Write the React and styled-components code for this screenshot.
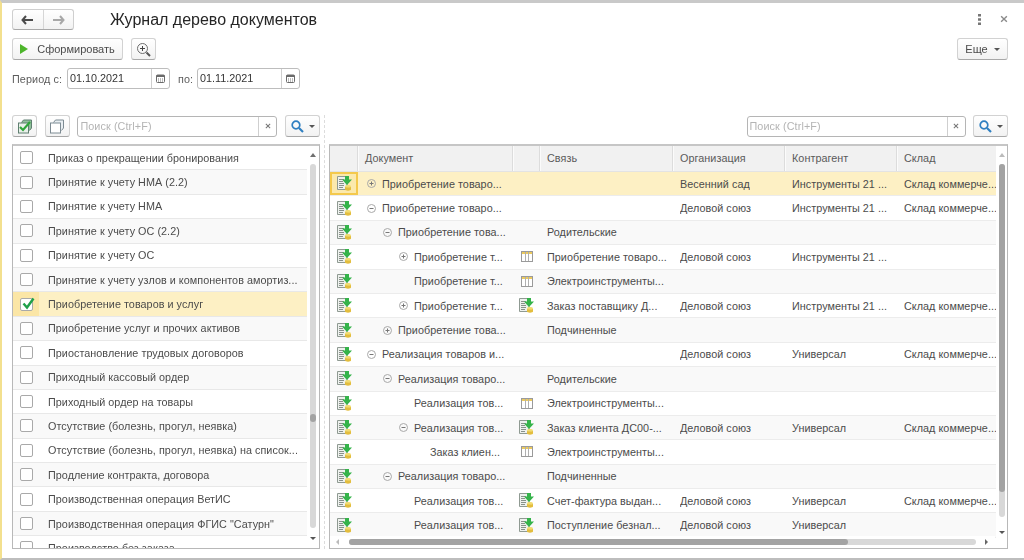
import React from "react";
import styled, { createGlobalStyle } from "styled-components";

const GlobalStyle = createGlobalStyle`
  html, body {
    margin: 0;
    height: 100%;
    background: #fff;
    overflow: hidden;
  }
  body {
    font-family: "Liberation Sans", Arial, sans-serif;
    font-size: 10.8px;
    color: #4b4b4b;
  }
`;

const COLS = "28px 155px 27px 133px 112px 112px 99px";

const Page = styled.div`
  width: 1024px;
  height: 560px;
  box-sizing: border-box;
  border-top: 3px solid #c9c9c9;
  border-bottom: 2px solid #bdbdbd;
  border-left: 2px solid #f3e08e;
  padding: 0 16px 9px 10px;
  display: flex;
  flex-direction: column;
  overflow: hidden;
  filter: blur(0.35px);
`;

const TitleBar = styled.div`
  height: 31px;
  padding-top: 6px;
  box-sizing: border-box;
  display: flex;
  align-items: flex-start;
`;

const NavGroup = styled.div`
  width: 62px;
  height: 21px;
  display: flex;
  background: linear-gradient(#fff, #f2f2f2);
  border: 1px solid #cfcfcf;
  border-bottom-color: #a8a8a8;
  border-radius: 3px;
  box-sizing: border-box;
`;

const NavCell = styled.div`
  flex: 1;
  display: flex;
  align-items: center;
  justify-content: center;
  color: ${(p) => (p.$off ? "#a8a8a8" : "#4a4a4a")};
  & + & {
    border-left: 1px solid #d6d6d6;
  }
`;

const Title = styled.h1`
  margin: 0 0 0 36px;
  font-size: 16px;
  line-height: 22px;
  font-weight: 400;
  color: #262626;
  flex: 1;
`;

const WinTools = styled.div`
  display: flex;
  align-items: center;
  gap: 19px;
  height: 20px;
  color: #8a8a8a;
`;

const Toolbar = styled.div`
  display: flex;
  align-items: center;
  height: 22px;
  margin-top: 4px;
  gap: 8px;
`;

const Button = styled.div`
  height: 22px;
  width: ${(p) => p.$w}px;
  box-sizing: border-box;
  display: flex;
  align-items: center;
  justify-content: center;
  gap: ${(p) => p.$gap || 0}px;
  font-size: 11px;
  color: #4b4b4b;
  background: linear-gradient(#fff, #f2f2f2);
  border: 1px solid #d2d2d2;
  border-bottom-color: #a8a8a8;
  border-radius: 3px;
  flex: none;
`;

const Spacer = styled.div`
  flex: 1;
`;

const PeriodRow = styled.div`
  display: flex;
  align-items: center;
  height: 21px;
  margin-top: 8px;
`;

const FieldLabel = styled.span`
  color: #5c5c5c;
  letter-spacing: 0.1px;
  flex: none;
  width: ${(p) => p.$w}px;
  margin-left: ${(p) => p.$ml || 0}px;
`;

const DateField = styled.div`
  width: 103px;
  height: 21px;
  box-sizing: border-box;
  display: flex;
  border: 1px solid #bdbdbd;
  border-radius: 3px;
  color: #333;
`;

const DateText = styled.div`
  flex: 1;
  padding-left: 2px;
  line-height: 19px;
`;

const DateBtn = styled.div`
  width: 17px;
  border-left: 1px solid #cfcfcf;
  display: flex;
  align-items: center;
  justify-content: center;
`;

const Panes = styled.div`
  flex: 1;
  min-height: 0;
  margin-top: 26px;
  display: grid;
  grid-template-columns: 308px 679px;
  column-gap: 9px;
  position: relative;
`;

const Pane = styled.div`
  display: flex;
  flex-direction: column;
  min-height: 0;
`;

const SearchRow = styled.div`
  height: 22px;
  display: flex;
  align-items: center;
  gap: ${(p) => p.$gap}px;
  justify-content: ${(p) => (p.$end ? "flex-end" : "flex-start")};
`;

const SearchBox = styled.div`
  width: ${(p) => p.$w}px;
  height: 21px;
  box-sizing: border-box;
  display: flex;
  border: 1px solid #b5b5b5;
  border-radius: 3px;
  flex: none;
`;

const SearchText = styled.div`
  flex: 1;
  padding-left: 2px;
  line-height: 19px;
  color: #b4b4b4;
  letter-spacing: 0.1px;
`;

const ClearBtn = styled.div`
  width: 17px;
  border-left: 1px solid #cfcfcf;
  display: flex;
  align-items: center;
  justify-content: center;
  color: #777;
`;

const Frame = styled.div`
  flex: 1;
  min-height: 0;
  margin-top: 7px;
  border: 1px solid #b8b8b8;
  border-top-width: 2px;
  border-top-color: #c6c6c6;
  display: flex;
  overflow: hidden;
  position: relative;
`;

const Rows = styled.div`
  flex: 1;
  min-width: 0;
  overflow: hidden;
`;

const ListRow = styled.div`
  height: 24.4px;
  box-sizing: border-box;
  display: flex;
  align-items: center;
  border-bottom: 1px solid #e8e8e8;
  background: ${(p) => (p.$on ? "#fdf0c4" : p.$alt ? "#f9f9f9" : "#fff")};
`;

const CheckCell = styled.div`
  width: 26px;
  height: 100%;
  flex: none;
  display: flex;
  align-items: center;
  padding-left: 7px;
  margin-right: 9px;
  box-sizing: border-box;
  background: ${(p) => (p.$on ? "#fbe6a6" : "transparent")};
`;

const Check = styled.div`
  width: 13px;
  height: 13px;
  box-sizing: border-box;
  border: 1px solid #a9a9a9;
  border-radius: 2px;
  background: #fff;
  flex: none;
  position: relative;
  svg {
    position: absolute;
    left: 0;
    top: -3px;
  }
`;

const ListText = styled.span`
  white-space: nowrap;
  overflow: hidden;
  letter-spacing: 0.04px;
  padding-right: 5px;
`;

const VScroll = styled.div`
  width: ${(p) => p.$w}px;
  flex: none;
  display: flex;
  flex-direction: column;
  align-items: center;
  background: #fff;
`;

const Arrow = styled.div`
  height: ${(p) => p.$h}px;
  flex: none;
  display: flex;
  align-items: center;
  justify-content: center;
  color: #6f6f6f;
`;

const Track = styled.div`
  flex: 1;
  width: 6px;
  background: #d8d8d8;
  border-radius: 3px;
  display: flex;
  flex-direction: column;
`;

const Thumb = styled.div`
  background: #a3a3a3;
  border-radius: 3px;
  width: 100%;
  flex: none;
  margin-top: ${(p) => p.$top || 0}px;
`;

const HeadRow = styled.div`
  height: 26px;
  display: grid;
  grid-template-columns: ${COLS};
  background: #f1f1f1;
  border-bottom: 1px solid #e3e3e3;
  box-sizing: border-box;
`;

const HeadCell = styled.div`
  line-height: 24px;
  padding-left: 6px;
  color: #5a5a5a;
  letter-spacing: 0.05px;
  border-left: ${(p) => (p.$first ? "none" : "1px solid #fbfbfb")};
  box-shadow: ${(p) => (p.$first ? "none" : "-1px 0 0 #dcdcdc")};
`;

const Row = styled.div`
  height: 24.4px;
  box-sizing: border-box;
  display: grid;
  grid-template-columns: ${COLS};
  border-bottom: 1px solid #ececec;
  background: ${(p) => (p.$on ? "#fdf0c4" : p.$alt ? "#f9f9f9" : "#fff")};
`;

const Cell = styled.div`
  display: flex;
  align-items: center;
  min-width: 0;
  padding-left: ${(p) => (p.$pad === undefined ? 7 : p.$pad)}px;
  color: #4b4b4b;
  letter-spacing: 0.04px;
`;

const IconCell = styled(Cell)`
  padding: 0;
  justify-content: center;
  ${(p) => (p.$focus ? "outline: 2px solid #f4c94c; outline-offset: -2px; background: #fbe9ad;" : "")}
`;

const CellText = styled.span`
  white-space: nowrap;
  overflow: hidden;
`;

const Toggle = styled.svg`
  width: 9px;
  height: 9px;
  flex: none;
  margin-right: 6px;
`;

const HBar = styled.div`
  position: absolute;
  left: 0;
  right: 12px;
  bottom: 0;
  height: 12px;
  background: #fff;
  display: flex;
  align-items: center;
  padding: 0 7px 0 6px;
  box-sizing: border-box;
  color: #8a8a8a;
`;

const HTrack = styled.div`
  flex: 1;
  height: 6px;
  margin: 0 9px 0 10px;
  background: #d8d8d8;
  border-radius: 3px;
`;

const HThumb = styled.div`
  width: 499px;
  height: 6px;
  background: #a3a3a3;
  border-radius: 3px;
`;

const Divider = styled.div`
  position: absolute;
  left: 312px;
  top: 0;
  bottom: 0;
  border-left: 1px dashed #dcdcdc;
`;

const Back = () => (
  <svg width="13" height="10" viewBox="0 0 13 10">
    <path d="M5 1 1.5 5 5 9M2 5h10" fill="none" stroke="currentColor" strokeWidth="2" />
  </svg>
);
const Forward = () => (
  <svg width="13" height="10" viewBox="0 0 13 10">
    <path d="M8 1l3.5 4L8 9M1 5h10" fill="none" stroke="currentColor" strokeWidth="2" />
  </svg>
);
const Play = () => (
  <svg width="8" height="10" viewBox="0 0 8 10">
    <path d="M0 0l8 5-8 5z" fill="#4db52b" />
  </svg>
);
const ZoomPlus = () => (
  <svg width="15" height="15" viewBox="0 0 15 15">
    <circle cx="6.5" cy="6.5" r="5" fill="none" stroke="#6d6d6d" />
    <path d="M4 6.5h5M6.5 4v5" stroke="#444" />
    <path d="M10.5 10.5 14 14" stroke="#555" strokeWidth="2" />
  </svg>
);
const Calendar = () => (
  <svg width="9" height="9" viewBox="0 0 9 9">
    <rect x="0.5" y="1" width="8" height="7.5" rx="1" fill="#fff" stroke="#6a6a6a" />
    <rect x="0.5" y="1" width="8" height="2" fill="#6a6a6a" />
    <path d="M2 5h1M4 5h1M6 5h1M2 7h1M4 7h1M6 7h1" stroke="#777" />
  </svg>
);
const Cross = ({ size = 7 }) => (
  <svg width={size} height={size} viewBox="0 0 7 7">
    <path d="M1 1l5 5M6 1 1 6" stroke="currentColor" strokeWidth="1.2" />
  </svg>
);
const Dots = () => (
  <svg width="3" height="11" viewBox="0 0 3 11">
    <path d="M0 0h3v2.5H0zM0 4.2h3v2.5H0zM0 8.4h3V11H0z" fill="#777" />
  </svg>
);
const Caret = () => (
  <svg width="6" height="3" viewBox="0 0 6 3">
    <path d="M0 0h6L3 3z" fill="#555" />
  </svg>
);
const SearchIcon = () => (
  <svg width="13" height="13" viewBox="0 0 13 13">
    <circle cx="5" cy="5" r="3.8" fill="none" stroke="#2f7fc1" strokeWidth="1.7" />
    <path d="M8 8l4 4" stroke="#2f7fc1" strokeWidth="2.2" />
  </svg>
);
const CheckAll = () => (
  <svg width="16" height="15" viewBox="0 0 16 15">
    <path d="M4.5 3.5 6.5 1h8v8l-2 2.5" fill="#8fbf9a" stroke="#5f7f70" />
    <rect x="1.5" y="4" width="10" height="10" fill="#e9f0ea" stroke="#5f7f70" />
    <path d="M3 8l3 3 7-8" fill="none" stroke="#2fa53a" strokeWidth="2.2" />
  </svg>
);
const UncheckAll = () => (
  <svg width="16" height="15" viewBox="0 0 16 15">
    <path d="M4.5 3.5 6.5 1h8v8l-2 2.5" fill="#e8eef2" stroke="#7d8b93" />
    <rect x="1.5" y="4" width="10" height="10" fill="#fff" stroke="#7d8b93" />
  </svg>
);
const BigCheck = () => (
  <svg width="15" height="15" viewBox="0 0 15 15">
    <path d="M2.5 7.5 6 11.5 12.5 2.5" fill="none" stroke="#1fa04a" strokeWidth="2.4" />
  </svg>
);
const DocIcon = () => (
  <svg width="15" height="15" viewBox="0 0 15 15">
    <path d="M0.5 0.5h8l1.5 1.5v11.5H0.5z" fill="#eef1ee" stroke="#8f9a92" />
    <path d="M2 3.5h5M2 5.5h4M2 7.5h5M2 9.5h5M2 11.5h4" stroke="#88918a" />
    <path d="M8 0h4v3.5h3L10 9 5 3.5h3z" fill="#35b34a" />
    <ellipse cx="11" cy="10.5" rx="3" ry="1.4" fill="#f2dc70" />
    <path d="M8 10.5v3c0 1.5 6 1.5 6 0v-3c0 1.4-6 1.4-6 0z" fill="#e3bd3d" />
  </svg>
);
const TableIcon = () => (
  <svg width="12" height="11" viewBox="0 0 12 11">
    <rect x="0.5" y="0.5" width="11" height="10" fill="#fff" stroke="#9a9a9a" />
    <rect x="1" y="1" width="10" height="2" fill="#ecca5e" />
    <path d="M4.5 1v9M7.5 1v9" stroke="#b0b0b0" />
  </svg>
);
const Expand = ({ open }) => (
  <Toggle viewBox="0 0 9 9">
    <circle cx="4.5" cy="4.5" r="4" fill="none" stroke="#a8a8a8" />
    <path d="M2.5 4.5h4" stroke="#777" />
    {!open && <path d="M4.5 2.5v4" stroke="#777" />}
  </Toggle>
);

const listItems = [
  "Приказ о прекращении бронирования",
  "Принятие к учету НМА (2.2)",
  "Принятие к учету НМА",
  "Принятие к учету ОС (2.2)",
  "Принятие к учету ОС",
  "Принятие к учету узлов и компонентов амортиз...",
  "Приобретение товаров и услуг",
  "Приобретение услуг и прочих активов",
  "Приостановление трудовых договоров",
  "Приходный кассовый ордер",
  "Приходный ордер на товары",
  "Отсутствие (болезнь, прогул, неявка)",
  "Отсутствие (болезнь, прогул, неявка) на список...",
  "Продление контракта, договора",
  "Производственная операция ВетИС",
  "Производственная операция ФГИС \"Сатурн\"",
  "Производство без заказа",
];

// level: отступ дерева, toggle: "+" / "-" / null, icon: значок во второй колонке
const rows = [
  { level: 0, toggle: "+", doc: "Приобретение товаро...", org: "Весенний сад", agent: "Инструменты 21 ...", store: "Склад коммерче..." },
  { level: 0, toggle: "-", doc: "Приобретение товаро...", org: "Деловой союз", agent: "Инструменты 21 ...", store: "Склад коммерче..." },
  { level: 1, toggle: "-", doc: "Приобретение това...", link: "Родительские" },
  { level: 2, toggle: "+", doc: "Приобретение т...", icon: "table", link: "Приобретение товаро...", org: "Деловой союз", agent: "Инструменты 21 ..." },
  { level: 2, doc: "Приобретение т...", icon: "table", link: "Электроинструменты..." },
  { level: 2, toggle: "+", doc: "Приобретение т...", icon: "doc", link: "Заказ поставщику Д...", org: "Деловой союз", agent: "Инструменты 21 ...", store: "Склад коммерче..." },
  { level: 1, toggle: "+", doc: "Приобретение това...", link: "Подчиненные" },
  { level: 0, toggle: "-", doc: "Реализация товаров и...", org: "Деловой союз", agent: "Универсал", store: "Склад коммерче..." },
  { level: 1, toggle: "-", doc: "Реализация товаро...", link: "Родительские" },
  { level: 2, doc: "Реализация тов...", icon: "table", link: "Электроинструменты..." },
  { level: 2, toggle: "-", doc: "Реализация тов...", icon: "doc", link: "Заказ клиента ДС00-...", org: "Деловой союз", agent: "Универсал", store: "Склад коммерче..." },
  { level: 3, doc: "Заказ клиен...", icon: "table", link: "Электроинструменты..." },
  { level: 1, toggle: "-", doc: "Реализация товаро...", link: "Подчиненные" },
  { level: 2, doc: "Реализация тов...", icon: "doc", link: "Счет-фактура выдан...", org: "Деловой союз", agent: "Универсал", store: "Склад коммерче..." },
  { level: 2, doc: "Реализация тов...", icon: "doc", link: "Поступление безнал...", org: "Деловой союз", agent: "Универсал" },
];

const headers = ["", "Документ", "", "Связь", "Организация", "Контрагент", "Склад"];

export default function App() {
  return (
    <>
      <GlobalStyle />
      <Page>
        <TitleBar>
          <NavGroup>
            <NavCell><Back /></NavCell>
            <NavCell $off><Forward /></NavCell>
          </NavGroup>
          <Title>Журнал дерево документов</Title>
          <WinTools>
            <Dots />
            <Cross size={8} />
          </WinTools>
        </TitleBar>
        <Toolbar>
          <Button $w={111} $gap={9}><Play />Сформировать</Button>
          <Button $w={25}><ZoomPlus /></Button>
          <Spacer />
          <Button $w={51} $gap={6}>Еще <Caret /></Button>
        </Toolbar>
        <PeriodRow>
          <FieldLabel $w={55}>Период с:</FieldLabel>
          <DateField>
            <DateText>01.10.2021</DateText>
            <DateBtn><Calendar /></DateBtn>
          </DateField>
          <FieldLabel $ml={8} $w={19}>по:</FieldLabel>
          <DateField>
            <DateText>01.11.2021</DateText>
            <DateBtn><Calendar /></DateBtn>
          </DateField>
        </PeriodRow>
        <Panes>
          <Pane>
            <SearchRow $gap={7.7}>
              <Button $w={25}><CheckAll /></Button>
              <Button $w={25}><UncheckAll /></Button>
              <SearchBox $w={200}>
                <SearchText>Поиск (Ctrl+F)</SearchText>
                <ClearBtn><Cross size={6} /></ClearBtn>
              </SearchBox>
              <Button $w={35} $gap={5}><SearchIcon /><Caret /></Button>
            </SearchRow>
            <Frame>
              <Rows>
                {listItems.map((text, i) => (
                  <ListRow key={text} $alt={i % 2 === 1} $on={i === 6}>
                    <CheckCell $on={i === 6}>
                      <Check>{i === 6 && <BigCheck />}</Check>
                    </CheckCell>
                    <ListText>{text}</ListText>
                  </ListRow>
                ))}
              </Rows>
              <VScroll $w={12}>
                <Arrow $h={18}><svg width="6" height="4" viewBox="0 0 6 4"><path d="M3 0l3 4H0z" fill="currentColor" /></svg></Arrow>
                <Track>
                  <Thumb $top={250} style={{ height: 8 }} />
                </Track>
                <Arrow $h={20}><Caret /></Arrow>
              </VScroll>
            </Frame>
          </Pane>
          <Divider />
          <Pane>
            <SearchRow $end $gap={7.5}>
              <SearchBox $w={219}>
                <SearchText>Поиск (Ctrl+F)</SearchText>
                <ClearBtn><Cross size={6} /></ClearBtn>
              </SearchBox>
              <Button $w={35} $gap={5}><SearchIcon /><Caret /></Button>
            </SearchRow>
            <Frame>
              <Rows>
                <HeadRow>
                  {headers.map((h, i) => (
                    <HeadCell key={i} $first={i === 0}>{h}</HeadCell>
                  ))}
                </HeadRow>
                {rows.map((r, i) => (
                  <Row key={i} $alt={i % 2 === 0 && i > 0} $on={i === 0}>
                    <IconCell $focus={i === 0}><DocIcon /></IconCell>
                    <Cell $pad={9 + r.level * 16}>
                      {r.toggle ? <Expand open={r.toggle === "-"} /> : <Toggle as="span" />}
                      <CellText>{r.doc}</CellText>
                    </Cell>
                    <IconCell>
                      {r.icon === "table" && <TableIcon />}
                      {r.icon === "doc" && <DocIcon />}
                    </IconCell>
                    <Cell><CellText>{r.link}</CellText></Cell>
                    <Cell><CellText>{r.org}</CellText></Cell>
                    <Cell><CellText>{r.agent}</CellText></Cell>
                    <Cell><CellText>{r.store}</CellText></Cell>
                  </Row>
                ))}
              </Rows>
              <VScroll $w={11}>
                <Arrow $h={18}><svg width="6" height="4" viewBox="0 0 6 4"><path d="M3 0l3 4H0z" fill="#bbb" /></svg></Arrow>
                <Track>
                  <Thumb style={{ height: 328 }} />
                </Track>
                <Arrow $h={31}><Caret /></Arrow>
              </VScroll>
              <HBar>
                <svg width="3" height="6" viewBox="0 0 3 6"><path d="M3 0v6L0 3z" fill="#bbb" /></svg>
                <HTrack><HThumb /></HTrack>
                <svg width="3" height="6" viewBox="0 0 3 6"><path d="M0 0v6l3-3z" fill="#666" /></svg>
              </HBar>
            </Frame>
          </Pane>
        </Panes>
      </Page>
    </>
  );
}
